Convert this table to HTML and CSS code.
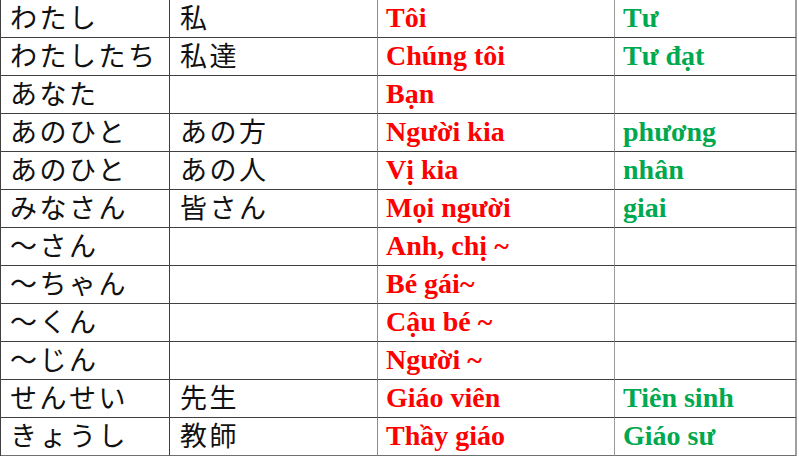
FILE: index.html
```html
<!DOCTYPE html>
<html lang="ja">
<head>
<meta charset="utf-8">
<title>Đại từ nhân xưng</title>
<link rel="stylesheet" href="styles.css">
</head>
<body>
<div class="grid">
  <div class="c jp c1">わたし</div><div class="c jp c2">私</div><div class="c vi red c3">Tôi</div><div class="c vi green c4">Tư</div>
  <div class="c jp c1">わたしたち</div><div class="c jp c2">私達</div><div class="c vi red c3">Chúng tôi</div><div class="c vi green c4">Tư đạt</div>
  <div class="c jp c1">あなた</div><div class="c jp c2"></div><div class="c vi red c3">Bạn</div><div class="c vi green c4"></div>
  <div class="c jp c1">あのひと</div><div class="c jp c2">あの方</div><div class="c vi red c3">Người kia</div><div class="c vi green c4">phương</div>
  <div class="c jp c1">あのひと</div><div class="c jp c2">あの人</div><div class="c vi red c3">Vị kia</div><div class="c vi green c4">nhân</div>
  <div class="c jp c1">みなさん</div><div class="c jp c2">皆さん</div><div class="c vi red c3">Mọi người</div><div class="c vi green c4">giai</div>
  <div class="c jp c1">〜さん</div><div class="c jp c2"></div><div class="c vi red c3">Anh, chị ~</div><div class="c vi green c4"></div>
  <div class="c jp c1">〜ちゃん</div><div class="c jp c2"></div><div class="c vi red c3">Bé gái~</div><div class="c vi green c4"></div>
  <div class="c jp c1">〜くん</div><div class="c jp c2"></div><div class="c vi red c3">Cậu bé ~</div><div class="c vi green c4"></div>
  <div class="c jp c1">〜じん</div><div class="c jp c2"></div><div class="c vi red c3">Người ~</div><div class="c vi green c4"></div>
  <div class="c jp c1">せんせい</div><div class="c jp c2">先生</div><div class="c vi red c3">Giáo viên</div><div class="c vi green c4">Tiên sinh</div>
  <div class="c jp c1">きょうし</div><div class="c jp c2">教師</div><div class="c vi red c3">Thầy giáo</div><div class="c vi green c4">Giáo sư</div>
</div>
</body>
</html>
```
FILE: styles.css
```css
html, body {
  margin: 0;
  padding: 0;
  background: #ffffff;
}
.grid {
  display: grid;
  grid-template-columns: 169px 208px 237px 182px;
  grid-template-rows: 38px;
  grid-auto-rows: 38px;
  width: 797px;
  border-left: 1px solid #404040;
  box-sizing: border-box;
}
.c {
  box-sizing: border-box;
  border-bottom: 1px solid #404040;
  white-space: nowrap;
}
.c1 { border-right: 1px solid #404040; padding-left: 9px; }
.c2 { border-right: 1px solid #8c8c8c; padding-left: 10px; }
.c3 { border-right: 1px solid #9a9a9a; padding-left: 8px; }
.c4 { border-right: 2px solid #a0a0a0; padding-left: 8px; }
.grid .c:nth-last-child(-n+4) { border-bottom-color: #707070; }
.jp {
  font-family: "Noto Sans CJK JP", sans-serif;
  font-size: 27px;
  font-weight: 400;
  letter-spacing: 2.5px;
  line-height: 34px;
  color: #111;
}
.vi {
  font-family: "Liberation Serif", serif;
  font-size: 28px;
  font-weight: 700;
  line-height: 36px;
}
.red { color: #ff0000; }
.green { color: #00a84f; }
```
